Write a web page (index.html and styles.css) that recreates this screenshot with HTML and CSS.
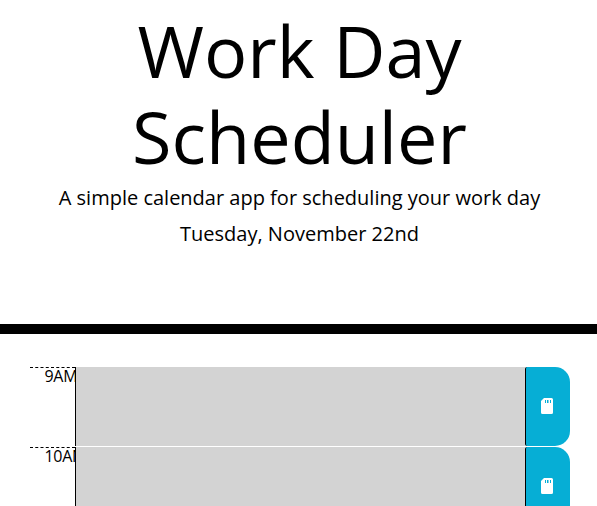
FILE: index.html
```html
<!DOCTYPE html>
<html lang="en">
<head>
<meta charset="utf-8">
<title>Work Day Scheduler</title>
<link rel="stylesheet" href="styles.css">
</head>
<body>
<header class="jumbotron">
  <h1 class="display">Work Day Scheduler</h1>
  <p class="lead">A simple calendar app for scheduling your work day</p>
  <p class="lead">Tuesday, November 22nd</p>
</header>
<main class="container">
  <div class="row">
    <div class="hour">9AM</div>
    <div class="entry"></div>
    <button class="save" aria-label="Save"><svg viewBox="0 0 12 16"><path fill="#fff" fill-rule="evenodd" d="M3 0h7.500Q12 0 12 1.500v13Q12 16 10.500 16h-9Q0 16 0 14.500V3zM4 2v3h1V2zM6 2v3h1.500V2zM9 2v3h1V2z"/></svg></button>
  </div>
  <div class="row">
    <div class="hour">10AM</div>
    <div class="entry"></div>
    <button class="save" aria-label="Save"><svg viewBox="0 0 12 16"><path fill="#fff" fill-rule="evenodd" d="M3 0h7.500Q12 0 12 1.500v13Q12 16 10.500 16h-9Q0 16 0 14.500V3zM4 2v3h1V2zM6 2v3h1.500V2zM9 2v3h1V2z"/></svg></button>
  </div>
</main>
</body>
</html>
```
FILE: styles.css
```css
* { box-sizing: border-box; }
body {
  margin: 0;
  height: 506px;
  overflow: hidden;
  background: #fff;
  color: #000;
  font: 16px/1 "Open Sans", sans-serif;
}
.jumbotron {
  height: 334px;
  padding: 7px 14px 0 16px;
  border-bottom: 10px solid #000;
  text-align: center;
}
.display {
  width: 360px;
  margin: 0 auto 3px;
  font-size: 72px;
  font-weight: 400;
  line-height: 86.4px;
}
.lead {
  margin: 0 0 6px;
  font-size: 20px;
  line-height: 30px;
}
.container { padding: 33px 27px 0 30px; }
.row { display: flex; height: 80px; }
.hour {
  width: 45px;
  padding-left: 14.5px;
  border-top: 1px dashed #000;
  letter-spacing: -0.3px;
  line-height: 16px;
  white-space: nowrap;
}
.entry {
  position: relative;
  width: 450px;
  height: 79px;
  background: #d3d3d3;
  border-left: 1px solid #000;
}
.save {
  display: flex;
  align-items: center;
  justify-content: center;
  width: 45px;
  height: 79px;
  padding: 0 2px 1px 0;
  border: 0;
  border-left: 1px solid #000;
  border-radius: 2px 15px 15px 2px;
  background: #06aed5;
}
.save svg { width: 12px; height: 16px; }
```
